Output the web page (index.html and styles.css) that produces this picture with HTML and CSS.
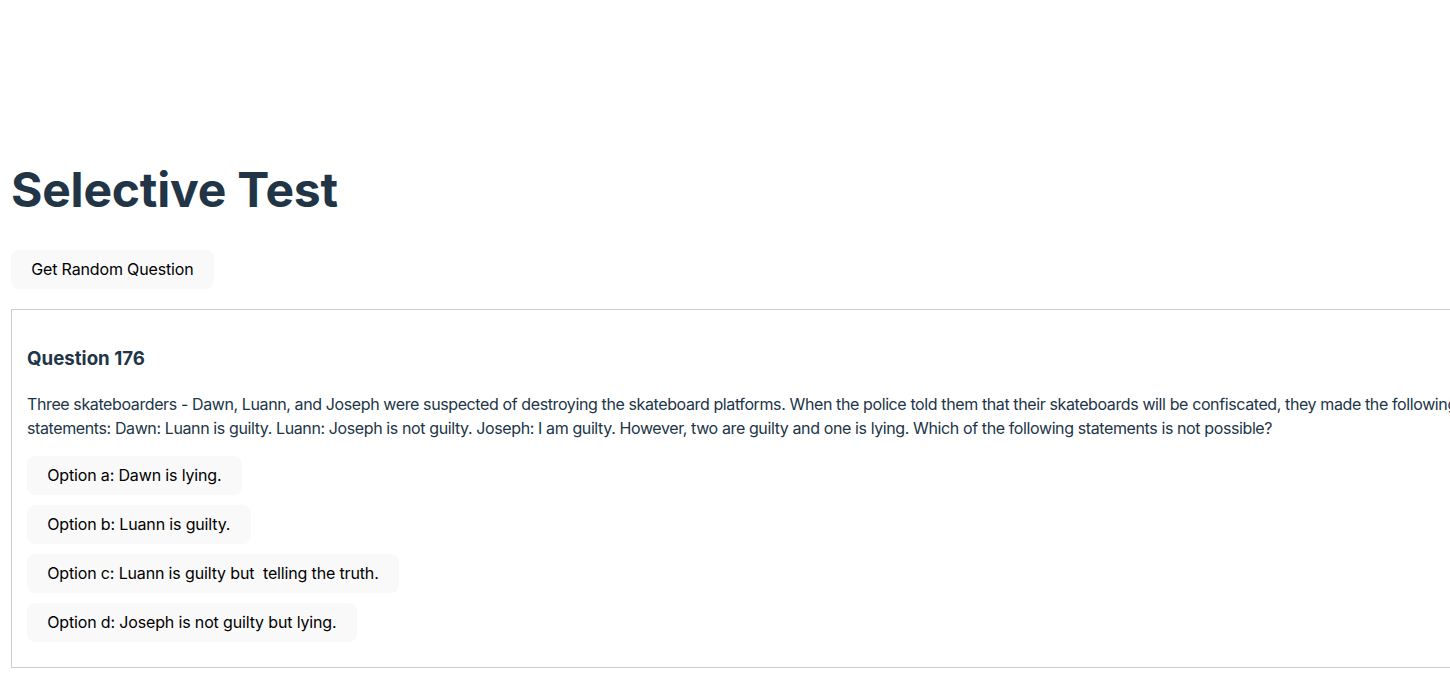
FILE: index.html
```html
<!DOCTYPE html>
<html lang="en">
<head>
<meta charset="utf-8">
<title>Selective Test</title>
<link rel="stylesheet" href="styles.css">
</head>
<body>
<div class="page">
  <h1 class="title">Selective Test</h1>
  <button class="btn">Get Random Question</button>
  <section class="card">
    <h3 class="q-title">Question 176</h3>
    <p class="q-text">Three skateboarders - Dawn, Luann, and Joseph were suspected of destroying the skateboard platforms. When the police told them that their skateboards will be confiscated, they made the following statements: Dawn: Luann is guilty. Luann: Joseph is not guilty. Joseph: I am guilty. However, two are guilty and one is lying. Which of the following statements is not possible?</p>
    <div class="options">
      <button class="btn">Option a: Dawn is lying.</button>
      <button class="btn">Option b: Luann is guilty.</button>
      <button class="btn">Option c: Luann is guilty but&nbsp; telling the truth.</button>
      <button class="btn">Option d: Joseph is not guilty but lying.</button>
    </div>
  </section>
</div>
</body>
</html>
```
FILE: styles.css
```css
html {
  overflow: hidden;
}
body {
  margin: 0;
  font-family: Inter, "Noto Sans", sans-serif;
  color: #213547;
  background: #ffffff;
  line-height: 1.5;
}
.page {
  padding: 127px 0 0 11px;
}
.title {
  font-size: 48px;
  line-height: 1.1;
  font-weight: 700;
  margin: 37px 0 33px;
  letter-spacing: -0.2px;
}
.btn {
  display: block;
  font-family: Inter, "Noto Sans", sans-serif;
  font-size: 16px;
  font-weight: 400;
  letter-spacing: -0.15px;
  color: #000;
  background: #f9f9f9;
  border: 1px solid transparent;
  border-radius: 8px;
  padding: 9px 19.2px;
  line-height: 19px;
  cursor: pointer;
}
.card {
  margin-top: 20px;
  width: 1462px;
  border: 1px solid #cccccc;
  padding: 16px 15px 25px;
}
.q-title {
  font-size: 18.7px;
  font-weight: 700;
  margin: 19px 0 19px;
  line-height: 1.5;
}
.q-text {
  font-size: 16px;
  margin: 0 0 16px;
  line-height: 24px;
  letter-spacing: -0.39px;
}
.options {
  display: flex;
  flex-direction: column;
  align-items: flex-start;
  gap: 10px;
}
```
